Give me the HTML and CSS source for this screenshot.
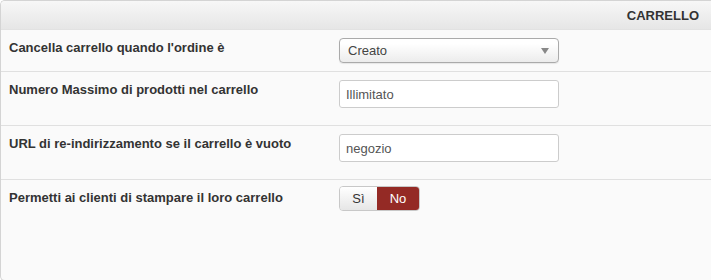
FILE: index.html
```html
<!DOCTYPE html>
<html lang="it">
<head>
    <meta charset="UTF-8" />
    <title>Carrello</title>
    <link rel="stylesheet" href="styles.css">
</head>
<body>
    <section class="pannello">
        <header class="pannello-titolo">CARRELLO</header>

        <div class="riga riga-select">
            <label class="etichetta">Cancella carrello quando l'ordine è</label>
            <div class="campo">
                <div class="select">
                    <span>Creato</span>
                    <span class="freccia"></span>
                </div>
            </div>
        </div>

        <div class="riga riga-input">
            <label class="etichetta">Numero Massimo di prodotti nel carrello</label>
            <div class="campo">
                <input class="testo" type="text" value="Illimitato">
            </div>
        </div>

        <div class="riga riga-input">
            <label class="etichetta">URL di re-indirizzamento se il carrello è vuoto</label>
            <div class="campo">
                <input class="testo" type="text" value="negozio">
            </div>
        </div>

        <div class="riga riga-ultima">
            <label class="etichetta">Permetti ai clienti di stampare il loro carrello</label>
            <div class="campo">
                <div class="interruttore">
                    <span class="opzione">Sì</span>
                    <span class="opzione attiva">No</span>
                </div>
            </div>
        </div>
    </section>
</body>
</html>
```

FILE: styles.css
```css
/* Variabili */
:root {
    --bordo: #d4d4d4;
    --linea: #e0e0e0;
    --testo: #333333;
    --fondo: #fafafa;
    --rosso: #942a25;
}

*, *::before, *::after {
    box-sizing: border-box;
    margin: 0;
    padding: 0;
}

html, body {
    height: 100%;
}

body {
    font-family: "Liberation Sans", Arial, sans-serif;
    font-size: 13px;
    color: var(--testo);
    background: #ffffff;
    overflow: hidden;
}

.pannello {
    width: 720px;
    height: 281px;
    background: var(--fondo);
    border: 1px solid var(--bordo);
    border-right: none;
    border-radius: 5px 0 0 5px;
    display: flex;
    flex-direction: column;
    overflow: hidden;
}

.pannello-titolo {
    height: 29px;
    padding: 0 21px 0 0;
    text-align: right;
    font-weight: bold;
    line-height: 29px;
    background: linear-gradient(to bottom, #f7f7f7, #e6e6e6);
    border-bottom: 1px solid #e2e2e2;
}

.riga {
    display: grid;
    grid-template-columns: 330px 220px;
    padding: 8px 0 0 8px;
    border-bottom: 1px solid var(--linea);
}

.riga-select {
    height: 42px;
}

.riga-input {
    height: 54px;
}

.riga-ultima {
    flex: 1;
    border-bottom: none;
    padding-top: 6px;
}

.etichetta {
    font-weight: bold;
    line-height: 20px;
}

.riga-ultima .etichetta {
    padding-top: 2px;
}

.select {
    height: 25px;
    width: 220px;
    border: 1px solid #aaaaaa;
    border-radius: 4px;
    background: linear-gradient(to bottom, #ffffff 20%, #ececec);
    box-shadow: 0 1px 1px rgba(0, 0, 0, 0.08);
    display: flex;
    align-items: center;
    justify-content: space-between;
    padding: 0 9px 0 8px;
    color: #444444;
}

.freccia {
    width: 0;
    height: 0;
    border-left: 4px solid transparent;
    border-right: 4px solid transparent;
    border-top: 6px solid #888888;
}

.testo {
    width: 220px;
    height: 28px;
    border: 1px solid #cccccc;
    border-radius: 3px;
    background: #ffffff;
    font-family: inherit;
    font-size: 13px;
    color: #555555;
    padding: 0 6px;
    outline: none;
}

.interruttore {
    display: inline-flex;
    height: 25px;
    border-radius: 4px;
    overflow: hidden;
    border: 1px solid #c8c8c8;
}

.opzione {
    display: flex;
    align-items: center;
    justify-content: center;
    width: 37px;
    background: linear-gradient(to bottom, #ffffff, #e6e6e6);
    color: #333333;
}

.opzione.attiva {
    width: 42px;
    background: var(--rosso);
    color: #ffffff;
}
```
